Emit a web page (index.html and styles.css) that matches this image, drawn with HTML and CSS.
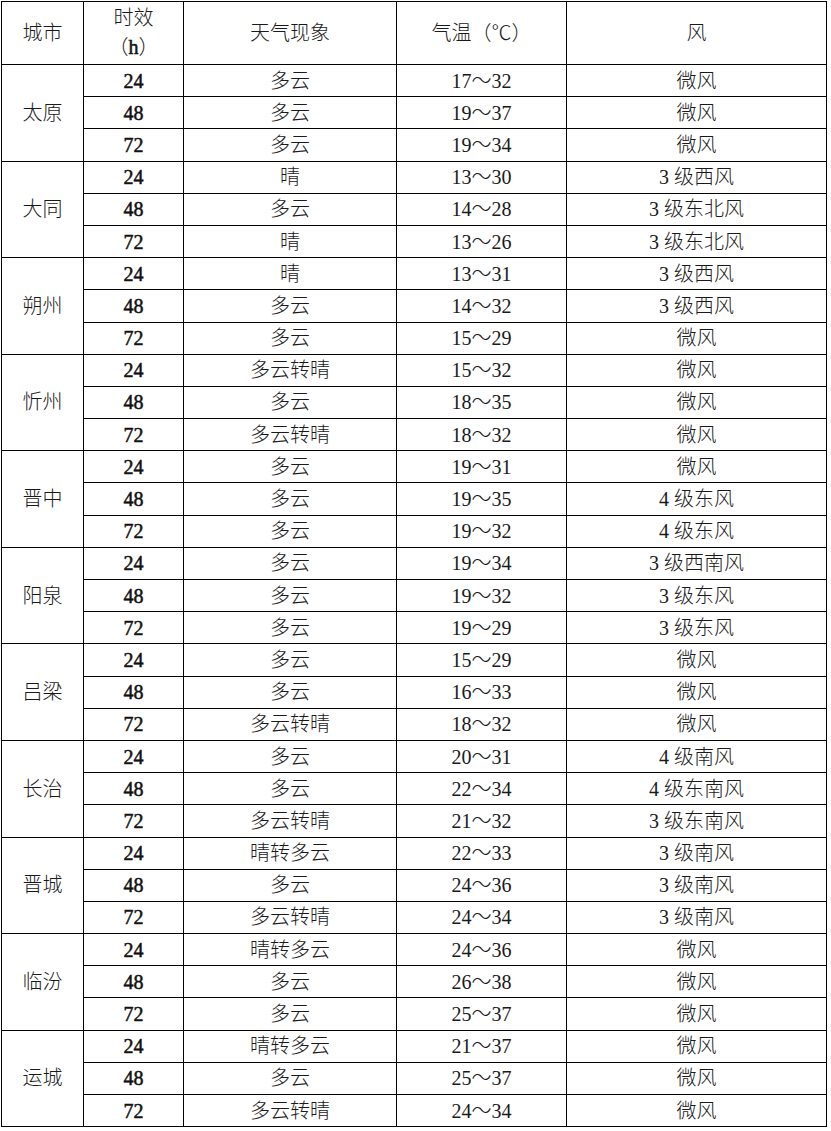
FILE: index.html
```html
<!DOCTYPE html>
<html lang="zh-CN">
<head>
<meta charset="utf-8">
<title>天气预报</title>
<link rel="stylesheet" href="styles.css">
</head>
<body>
<table class="wx">
<colgroup>
<col class="c-city"><col class="c-hr"><col class="c-wx"><col class="c-tmp"><col class="c-wind">
</colgroup>
<thead>
<tr class="head">
<th>城市</th><th class="hr-h">时效<br><span class="h">（<b>h</b>）</span></th><th>天气现象</th><th>气温（℃）</th><th>风</th>
</tr>
</thead>
<tbody>
<tr><td rowspan="3" class="city">太原</td><td class="hr">24</td><td>多云</td><td>17～32</td><td>微风</td></tr>
<tr><td class="hr">48</td><td>多云</td><td>19～37</td><td>微风</td></tr>
<tr><td class="hr">72</td><td>多云</td><td>19～34</td><td>微风</td></tr>

<tr><td rowspan="3" class="city">大同</td><td class="hr">24</td><td>晴</td><td>13～30</td><td>3 级西风</td></tr>
<tr><td class="hr">48</td><td>多云</td><td>14～28</td><td>3 级东北风</td></tr>
<tr><td class="hr">72</td><td>晴</td><td>13～26</td><td>3 级东北风</td></tr>

<tr><td rowspan="3" class="city">朔州</td><td class="hr">24</td><td>晴</td><td>13～31</td><td>3 级西风</td></tr>
<tr><td class="hr">48</td><td>多云</td><td>14～32</td><td>3 级西风</td></tr>
<tr><td class="hr">72</td><td>多云</td><td>15～29</td><td>微风</td></tr>

<tr><td rowspan="3" class="city">忻州</td><td class="hr">24</td><td>多云转晴</td><td>15～32</td><td>微风</td></tr>
<tr><td class="hr">48</td><td>多云</td><td>18～35</td><td>微风</td></tr>
<tr><td class="hr">72</td><td>多云转晴</td><td>18～32</td><td>微风</td></tr>

<tr><td rowspan="3" class="city">晋中</td><td class="hr">24</td><td>多云</td><td>19～31</td><td>微风</td></tr>
<tr><td class="hr">48</td><td>多云</td><td>19～35</td><td>4 级东风</td></tr>
<tr><td class="hr">72</td><td>多云</td><td>19～32</td><td>4 级东风</td></tr>

<tr><td rowspan="3" class="city">阳泉</td><td class="hr">24</td><td>多云</td><td>19～34</td><td>3 级西南风</td></tr>
<tr><td class="hr">48</td><td>多云</td><td>19～32</td><td>3 级东风</td></tr>
<tr><td class="hr">72</td><td>多云</td><td>19～29</td><td>3 级东风</td></tr>

<tr><td rowspan="3" class="city">吕梁</td><td class="hr">24</td><td>多云</td><td>15～29</td><td>微风</td></tr>
<tr><td class="hr">48</td><td>多云</td><td>16～33</td><td>微风</td></tr>
<tr><td class="hr">72</td><td>多云转晴</td><td>18～32</td><td>微风</td></tr>

<tr><td rowspan="3" class="city">长治</td><td class="hr">24</td><td>多云</td><td>20～31</td><td>4 级南风</td></tr>
<tr><td class="hr">48</td><td>多云</td><td>22～34</td><td>4 级东南风</td></tr>
<tr><td class="hr">72</td><td>多云转晴</td><td>21～32</td><td>3 级东南风</td></tr>

<tr><td rowspan="3" class="city">晋城</td><td class="hr">24</td><td>晴转多云</td><td>22～33</td><td>3 级南风</td></tr>
<tr><td class="hr">48</td><td>多云</td><td>24～36</td><td>3 级南风</td></tr>
<tr><td class="hr">72</td><td>多云转晴</td><td>24～34</td><td>3 级南风</td></tr>

<tr><td rowspan="3" class="city">临汾</td><td class="hr">24</td><td>晴转多云</td><td>24～36</td><td>微风</td></tr>
<tr><td class="hr">48</td><td>多云</td><td>26～38</td><td>微风</td></tr>
<tr><td class="hr">72</td><td>多云</td><td>25～37</td><td>微风</td></tr>

<tr><td rowspan="3" class="city">运城</td><td class="hr">24</td><td>晴转多云</td><td>21～37</td><td>微风</td></tr>
<tr><td class="hr">48</td><td>多云</td><td>25～37</td><td>微风</td></tr>
<tr><td class="hr">72</td><td>多云转晴</td><td>24～34</td><td>微风</td></tr>
</tbody>
</table>
</body>
</html>
```

FILE: styles.css
```css
html, body {
  margin: 0;
  padding: 0;
  background: #fff;
}
body {
  padding: 1px 0 0 1px;
  font-family: "Liberation Serif", "Noto Sans CJK SC", serif;
  font-size: 20px;
  font-weight: 300;
  color: #1a1a1a;
}
.wx {
  border-collapse: collapse;
  table-layout: fixed;
  width: 826px;
}
.c-city { width: 82px; }
.c-hr { width: 100px; }
.c-wx { width: 213px; }
.c-tmp { width: 170px; }
.c-wind { width: 260px; }
.wx th, .wx td {
  border: 1px solid #000;
  padding: 0;
  text-align: center;
  vertical-align: middle;
  font-weight: 300;
  line-height: 24px;
  white-space: nowrap;
}
.wx tr.head { height: 63px; }
.wx tbody tr { height: 32.2px; }
.wx .hr-h { line-height: 29px; }
.wx .hr, .wx b {
  font-weight: 400;
  color: #111;
  -webkit-text-stroke: 0.5px #111;
}
```
